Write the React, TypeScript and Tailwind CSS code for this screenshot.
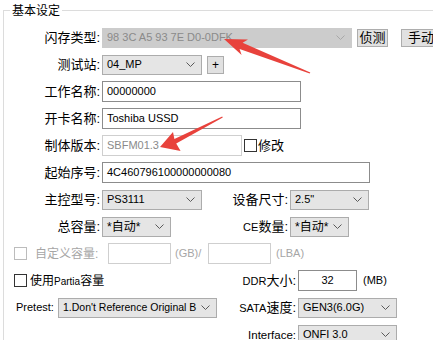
import React from "react";

function Chevron({ disabled }: { disabled?: boolean }) {
  return (
    <svg width="9" height="5" viewBox="0 0 9 5" className="shrink-0">
      <polyline
        points="0.5,0.5 4.5,4.5 8.5,0.5"
        fill="none"
        stroke={disabled ? "#a8a8a8" : "#5a5a5a"}
        strokeWidth="1"
      />
    </svg>
  );
}

function Combo({ w, text, disabled, cjk, small }: { w: string; text: string; disabled?: boolean; cjk?: boolean; small?: boolean }) {
  return (
    <div
      className={`${w} h-[20px] shrink-0 flex items-center justify-between pl-[4px] pr-[6px] border overflow-hidden whitespace-nowrap ${
        disabled ? "bg-[#cccccc] border-[#cccccc] text-[#8a8a8a]" : "bg-[#e5e5e5] border-[#acacac] text-black"
      } ${cjk ? "text-[12px]" : small ? "text-[10.5px]" : "text-[11px]"}`}
    >
      <span>{text}</span>
      <Chevron disabled={disabled} />
    </div>
  );
}

function Input({ w, text, disabled, center }: { w: string; text?: string; disabled?: boolean; center?: boolean }) {
  return (
    <div
      className={`${w} h-[21px] shrink-0 flex items-center px-[4px] border bg-white text-[11px] whitespace-nowrap overflow-hidden ${
        disabled ? "border-[#cfcfcf] text-[#8a8a8a]" : "border-[#8c8c8c] text-black"
      } ${center ? "justify-center" : ""}`}
    >
      {text}
    </div>
  );
}

function Btn({ w, children }: { w: string; children: React.ReactNode }) {
  return (
    <div className={`${w} h-[18px] shrink-0 flex items-center justify-center bg-[#e1e1e1] border border-[#adadad] text-[13px] text-black`}>
      {children}
    </div>
  );
}

function Box({ disabled }: { disabled?: boolean }) {
  return (
    <div className={`w-[13px] h-[13px] shrink-0 border bg-white ${disabled ? "border-[#bcbcbc]" : "border-[#333333]"}`} />
  );
}

function Label({ w, children }: { w: string; children: React.ReactNode }) {
  return <div className={`${w} shrink-0 text-right text-[13px] text-black whitespace-nowrap`}>{children}</div>;
}

function Row({ children }: { children: React.ReactNode }) {
  return <div className="h-[27px] flex items-center">{children}</div>;
}

export default function App() {
  return (
    <div className="relative w-[433px] h-[340px] overflow-hidden bg-white font-['Liberation_Sans','Noto_Sans_CJK_SC',sans-serif] leading-none">
      <div className="relative ml-[3px] mt-[10px] h-[400px] border-l border-t border-[#dcdcdc] pt-[13px]">
        <div className="absolute top-[-7px] left-[6px] h-[14px] leading-[14px] px-[2px] bg-white text-[12px] text-black">
          基本设定
        </div>

        <Row>
          <Label w="w-[96px]">闪存类型:</Label>
          <div className="ml-[2px]" />
          <Combo w="w-[250px]" text="98 3C A5 93 7E D0-0DFK" disabled />
          <div className="ml-[5px]" />
          <Btn w="w-[31px]">侦测</Btn>
          <div className="ml-[13px]" />
          <Btn w="w-[40px]">手动</Btn>
        </Row>

        <Row>
          <Label w="w-[96px]">测试站:</Label>
          <div className="ml-[2px]" />
          <Combo w="w-[100px]" text="04_MP" />
          <div className="ml-[5px]" />
          <div className="w-[17px] h-[18px] shrink-0 flex items-center justify-center bg-[#e1e1e1] border border-[#adadad] text-[12px]">
            +
          </div>
        </Row>

        <Row>
          <Label w="w-[96px]">工作名称:</Label>
          <div className="ml-[2px]" />
          <Input w="w-[199px]" text="00000000" />
        </Row>

        <Row>
          <Label w="w-[96px]">开卡名称:</Label>
          <div className="ml-[2px]" />
          <Input w="w-[199px]" text="Toshiba USSD" />
        </Row>

        <Row>
          <Label w="w-[96px]">制体版本:</Label>
          <div className="ml-[2px]" />
          <Input w="w-[140px]" text="SBFM01.3" disabled />
          <div className="ml-[2px]" />
          <Box />
          <span className="ml-[1px] text-[13px]">修改</span>
        </Row>

        <Row>
          <Label w="w-[96px]">起始序号:</Label>
          <div className="ml-[2px]" />
          <Input w="w-[268px]" text="4C460796100000000080" />
        </Row>

        <Row>
          <Label w="w-[96px]">主控型号:</Label>
          <div className="ml-[2px]" />
          <Combo w="w-[100px]" text="PS3111" />
          <Label w="w-[86px]">设备尺寸:</Label>
          <div className="ml-[2px]" />
          <Combo w="w-[79px]" text={'2.5"'} />
        </Row>

        <Row>
          <Label w="w-[96px]">总容量:</Label>
          <div className="ml-[2px]" />
          <Combo w="w-[69px]" text="*自动*" cjk />
          <Label w="w-[117px]">
            <span className="text-[11px]">CE</span>数量:
          </Label>
          <div className="ml-[2px]" />
          <Combo w="w-[59px]" text="*自动*" cjk />
        </Row>

        <Row>
          <div className="ml-[10px]" />
          <Box disabled />
          <div className="ml-[8px] w-[73px] shrink-0 text-[12px] text-[#a6a6a6]">自定义容量:</div>
          <Input w="w-[63px]" disabled />
          <div className="w-[37px] shrink-0 pl-[4px] text-[11px] text-[#a6a6a6]">(GB)/</div>
          <Input w="w-[63px]" disabled />
          <div className="ml-[5px] text-[11px] text-[#a6a6a6]">(LBA)</div>
        </Row>

        <Row>
          <div className="w-[220px] shrink-0 flex items-center">
            <div className="ml-[10px]" />
            <Box />
            <span className="ml-[3px] text-[12px] whitespace-nowrap">
              使用<span className="text-[10px]">Partia</span>容量
            </span>
          </div>
          <Label w="w-[72px]">
            <span className="text-[11px]">DDR</span>大小:
          </Label>
          <div className="ml-[2px]" />
          <Input w="w-[59px]" text="32" center />
          <div className="ml-[6px] text-[11px]">(MB)</div>
        </Row>

        <Row>
          <div className="w-[220px] shrink-0 flex items-center">
            <div className="ml-[12px] w-[42px] shrink-0 text-[11px]">Pretest:</div>
            <Combo w="w-[159px]" text="1.Don't Reference Original B" small />
          </div>
          <Label w="w-[72px]">
            <span className="text-[11px]">SATA</span>速度:
          </Label>
          <div className="ml-[2px]" />
          <Combo w="w-[99px]" text="GEN3(6.0G)" />
        </Row>

        <Row>
          <div className="w-[220px] shrink-0" />
          <Label w="w-[72px]">
            <span className="text-[11.5px]">Interface:</span>
          </Label>
          <div className="ml-[2px]" />
          <Combo w="w-[99px]" text="ONFI 3.0" />
        </Row>
      </div>

      <svg className="absolute inset-0 pointer-events-none" width="433" height="340" viewBox="0 0 433 340">
        <polygon
          points="224,39 248,39.5 242.6,42.8 310.3,72.5 309.7,73.5 239.6,49 241.6,55"
          fill="#e8423c"
        />
        <polygon
          points="160,147 173,132 174.4,139 222.2,116.6 222.8,117.4 176.2,143.5 180.6,151"
          fill="#e8423c"
        />
      </svg>
    </div>
  );
}
